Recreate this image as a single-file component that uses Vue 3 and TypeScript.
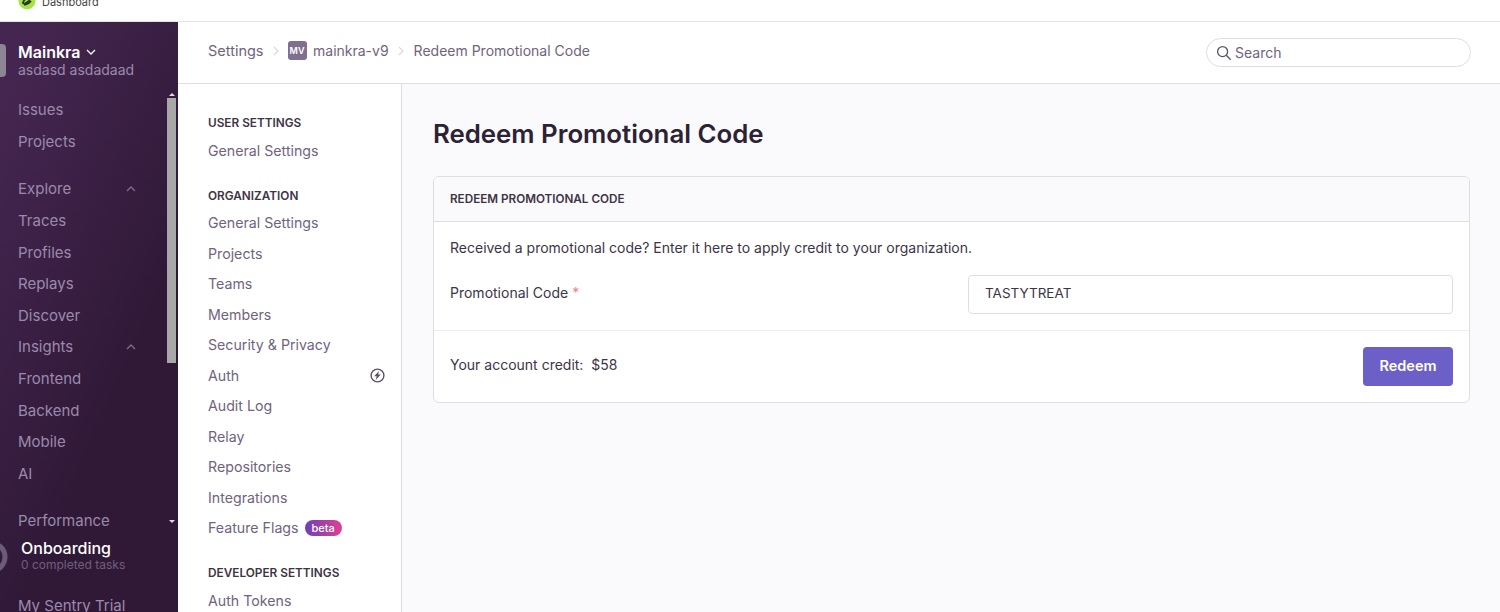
<template>
  <div class="app">
    <div class="tabstrip">
      <svg class="favicon" width="18" height="18" viewBox="0 0 18 18">
        <circle cx="9" cy="9" r="8.5" fill="#a4e34a" />
        <path d="M5 11c1-4 4-6 8-6-1 1-1 3-2 4s-3 1-4 3zM6 13c2-1 5-1 7-4" fill="none" stroke="#2b3a1a" stroke-width="1.8" />
      </svg>
      <span class="tabtitle">Dashboard</span>
    </div>
    <div class="shell">
      <aside class="sidebar">
        <div class="org">
          <div class="org-avatar"></div>
          <div>
            <div class="org-name">
              Mainkra
              <svg width="10" height="10" viewBox="0 0 10 10"><path d="M1 3l4 4 4-4" fill="none" stroke="#fff" stroke-width="1.3" /></svg>
            </div>
            <div class="org-user">asdasd asdadaad</div>
          </div>
        </div>
        <div class="side-scroll">
          <div class="side-list">
            <template v-for="item in sideItems" :key="item.label">
              <div class="side-item" :class="{ gap: item.gap }">
                <span>{{ item.label }}</span>
                <svg v-if="item.open" class="side-chev" width="10" height="10" viewBox="0 0 10 10"><path d="M1 7l4-4 4 4" fill="none" stroke="#7d6c8d" stroke-width="1.3" /></svg>
              </div>
            </template>
          </div>
          <div class="scrollbar">
            <span class="arrow-up"></span>
            <span class="thumb"></span>
            <span class="arrow-down"></span>
          </div>
        </div>
        <div class="onboarding">
          <svg class="ring" width="36" height="36" viewBox="0 0 36 36"><circle cx="18" cy="18" r="14" fill="none" stroke="#6b5a78" stroke-width="5" /></svg>
          <div>
            <div class="onb-title">Onboarding</div>
            <div class="onb-sub">0 completed tasks</div>
          </div>
        </div>
        <div class="trial">My Sentry Trial</div>
      </aside>

      <div class="content">
        <header class="topbar">
          <nav class="crumbs">
            <span class="crumb-root">Settings</span>
            <svg class="crumb-sep" width="8" height="10" viewBox="0 0 8 10"><path d="M2 1l4 4-4 4" fill="none" stroke="#d9d4df" stroke-width="1.1" /></svg>
            <span class="project-badge">MV</span>
            <span>mainkra-v9</span>
            <svg class="crumb-sep" width="8" height="10" viewBox="0 0 8 10"><path d="M2 1l4 4-4 4" fill="none" stroke="#d9d4df" stroke-width="1.1" /></svg>
            <span>Redeem Promotional Code</span>
          </nav>
          <div class="search">
            <svg width="16" height="16" viewBox="0 0 16 16"><circle cx="6.6" cy="6.6" r="5" fill="none" stroke="#5c5068" stroke-width="1.3" /><path d="M10.3 10.3l4.4 4.4" stroke="#5c5068" stroke-width="1.3" /></svg>
            <span>Search</span>
          </div>
        </header>
        <div class="body">
          <nav class="settings-nav">
            <section v-for="group in navGroups" :key="group.title" class="nav-group">
              <h4>{{ group.title }}</h4>
              <div v-for="link in group.links" :key="link.label" class="nav-link">
                <span>{{ link.label }}</span>
                <span v-if="link.beta" class="beta">beta</span>
                <svg v-if="link.bolt" class="bolt" width="15" height="15" viewBox="0 0 15 15">
                  <circle cx="7.5" cy="7.5" r="6.4" fill="none" stroke="#5c5068" stroke-width="1.4" />
                  <path d="M9 2.9L4.2 8.3h2.5l-1 3.8 5.1-5.5H8.2z" fill="#5c5068" />
                </svg>
              </div>
            </section>
          </nav>
          <main class="main">
            <h1>Redeem Promotional Code</h1>
            <div class="panel">
              <div class="panel-head">REDEEM PROMOTIONAL CODE</div>
              <p class="panel-text">Received a promotional code? Enter it here to apply credit to your organization.</p>
              <div class="field">
                <label>Promotional Code <span class="req">*</span></label>
                <div class="input">TASTYTREAT</div>
              </div>
              <div class="panel-foot">
                <span class="credit">Your account credit: &nbsp;$58</span>
                <button class="redeem">Redeem</button>
              </div>
            </div>
          </main>
        </div>
      </div>
    </div>
  </div>
</template>

<script setup lang="ts">
interface SideItem {
  label: string;
  gap?: boolean;
  open?: boolean;
}

interface NavLink {
  label: string;
  beta?: boolean;
  bolt?: boolean;
}

const sideItems: SideItem[] = [
  { label: 'Issues' },
  { label: 'Projects' },
  { label: 'Explore', gap: true, open: true },
  { label: 'Traces' },
  { label: 'Profiles' },
  { label: 'Replays' },
  { label: 'Discover' },
  { label: 'Insights', open: true },
  { label: 'Frontend' },
  { label: 'Backend' },
  { label: 'Mobile' },
  { label: 'AI' },
  { label: 'Performance', gap: true },
];

const navGroups: { title: string; links: NavLink[] }[] = [
  { title: 'USER SETTINGS', links: [{ label: 'General Settings' }] },
  {
    title: 'ORGANIZATION',
    links: [
      { label: 'General Settings' },
      { label: 'Projects' },
      { label: 'Teams' },
      { label: 'Members' },
      { label: 'Security & Privacy' },
      { label: 'Auth', bolt: true },
      { label: 'Audit Log' },
      { label: 'Relay' },
      { label: 'Repositories' },
      { label: 'Integrations' },
      { label: 'Feature Flags', beta: true },
    ],
  },
  { title: 'DEVELOPER SETTINGS', links: [{ label: 'Auth Tokens' }] },
];
</script>

<style scoped>
.app {
  width: 1500px;
  height: 612px;
  overflow: hidden;
  background: #fff;
  font-family: Inter, "Noto Sans", sans-serif;
  font-size: 14px;
  color: #3e3446;
}

.tabstrip {
  height: 22px;
  display: flex;
  align-items: flex-start;
  gap: 6px;
  padding-left: 18px;
  overflow: hidden;
  box-sizing: border-box;
  border-bottom: 1px solid #e4e1e8;
}

.favicon {
  margin-top: -8px;
  flex-shrink: 0;
}

.tabtitle {
  margin-top: -5px;
  font-size: 11px;
  line-height: 14px;
  color: #444;
}

.shell {
  display: flex;
  height: 590px;
}

.sidebar {
  width: 178px;
  flex-shrink: 0;
  display: flex;
  flex-direction: column;
  overflow: hidden;
  background: linear-gradient(294deg, #2f1937 35%, #452650 92%);
  color: #9b8aac;
}

.sidebar > * {
  flex-shrink: 0;
}

.org {
  display: flex;
  gap: 12px;
  height: 66px;
  padding-top: 21px;
  box-sizing: border-box;
  margin-left: -26px;
}

.org-avatar {
  width: 32px;
  height: 33px;
  margin-top: 1px;
  border-radius: 4px;
  background: #8d8494;
  flex-shrink: 0;
}

.org-name {
  display: flex;
  align-items: center;
  gap: 6px;
  font-size: 16px;
  line-height: 18px;
  font-weight: 600;
  color: #fff;
}

.org-user {
  font-size: 14px;
  line-height: 17px;
}

.side-scroll {
  position: relative;
  height: 450px;
  overflow: hidden;
}

.side-list {
  padding-top: 6px;
}

.side-item {
  display: flex;
  align-items: center;
  justify-content: space-between;
  height: 31.6px;
  padding: 0 42px 0 18px;
  font-size: 15px;
}

.side-item.gap {
  margin-top: 16px;
}

.side-chev {
  flex-shrink: 0;
}

.scrollbar {
  position: absolute;
  top: 0;
  right: 2px;
  bottom: 0;
  width: 9px;
  display: flex;
  flex-direction: column;
  align-items: center;
}

.arrow-up {
  margin-top: 5px;
  border: 3px solid transparent;
  border-top: 0;
  border-bottom: 3px solid #ddd;
}

.thumb {
  width: 9px;
  height: 265px;
  margin-top: 2px;
  background: #a8a8a8;
}

.arrow-down {
  margin-top: auto;
  margin-bottom: 15px;
  border: 3px solid transparent;
  border-bottom: 0;
  border-top: 3px solid #ddd;
}

.onboarding {
  display: flex;
  gap: 12px;
  margin-left: -9px;
  height: 58px;
  align-items: flex-start;
}

.ring {
  margin-left: -18px;
  margin-top: 1px;
  flex-shrink: 0;
}

.onb-title {
  font-size: 16px;
  line-height: 20px;
  font-weight: 500;
  color: #fff;
}

.onb-sub {
  font-size: 12px;
  line-height: 13px;
  color: #6f5f7f;
}

.trial {
  padding-left: 18px;
  font-size: 15px;
  line-height: 20px;
}

.content {
  flex: 1;
  min-width: 0;
  display: flex;
  flex-direction: column;
}

.topbar {
  height: 62px;
  flex-shrink: 0;
  display: flex;
  align-items: center;
  justify-content: space-between;
  box-sizing: border-box;
  padding: 0 29px 0 30px;
  border-bottom: 1px solid #e0dce5;
}

.crumbs {
  display: flex;
  align-items: center;
  color: #71637e;
  margin-top: -4px;
}

.crumb-root {
  font-size: 14.5px;
}

.crumb-sep {
  margin: 0 8px;
}

.crumb-sep + span + span + .crumb-sep {
  margin: 0 8.5px;
}

.project-badge {
  width: 19px;
  height: 19px;
  border-radius: 3px;
  background: #80708f;
  color: #fff;
  font-size: 9px;
  font-weight: 600;
  display: flex;
  align-items: center;
  justify-content: center;
  margin-right: 6.5px;
}

.search {
  width: 265px;
  height: 29px;
  box-sizing: border-box;
  display: flex;
  align-items: center;
  gap: 3px;
  padding-left: 9px;
  border: 1px solid #e0dce5;
  border-radius: 15px;
  color: #71637e;
}

.body {
  flex: 1;
  display: flex;
  min-height: 0;
}

.settings-nav {
  width: 224px;
  flex-shrink: 0;
  box-sizing: border-box;
  padding: 31px 16px 0 30px;
  border-right: 1px solid #e0dce5;
  overflow: hidden;
  font-size: 14.2px;
}

.nav-group {
  margin-bottom: 22px;
}

.nav-group h4 {
  margin: 0 0 4px;
  font-size: 11.8px;
  line-height: 16px;
  font-weight: 600;
  color: #3e3446;
}

.nav-link {
  display: flex;
  align-items: center;
  gap: 6px;
  height: 30.5px;
  color: #71637e;
}

.bolt {
  margin-left: auto;
}

.beta {
  font-size: 11px;
  line-height: 16px;
  font-weight: 500;
  padding: 0 7px;
  border-radius: 8px;
  color: #fff;
  background: linear-gradient(90deg, #6c3fb8, #e1408f);
}

.main {
  flex: 1;
  min-width: 0;
  box-sizing: border-box;
  padding: 32px 30px 0 31px;
  background: #faf9fb;
}

.main h1 {
  margin: 0 0 24px;
  font-size: 25.8px;
  line-height: 36px;
  font-weight: 600;
  color: #2b2233;
}

.panel {
  background: #fff;
  border: 1px solid #e0dce5;
  border-radius: 6px;
  overflow: hidden;
}

.panel-head {
  height: 45px;
  box-sizing: border-box;
  display: flex;
  align-items: center;
  padding-left: 16px;
  background: #faf9fb;
  border-bottom: 1px solid #e0dce5;
  font-size: 11.7px;
  font-weight: 600;
}

.panel-text {
  margin: 0;
  padding: 17px 16px 0;
  line-height: 18px;
}

.field {
  display: flex;
  align-items: center;
  padding: 18px 16px 16px;
  border-bottom: 1px solid #efedf1;
}

.field label {
  width: 518px;
  flex-shrink: 0;
  margin-bottom: 4px;
}

.req {
  color: #f0808a;
}

.input {
  flex: 1;
  height: 39px;
  box-sizing: border-box;
  display: flex;
  align-items: center;
  padding: 0 0 3px 16px;
  border: 1px solid #e0dce5;
  border-radius: 4px;
  font-size: 13.5px;
}

.panel-foot {
  display: flex;
  align-items: center;
  justify-content: space-between;
  padding: 16px;
}

.credit {
  margin-bottom: 4px;
}

.redeem {
  width: 90px;
  height: 39px;
  padding: 0 0 2px;
  border: 0;
  border-radius: 4px;
  background: #6c5fc7;
  color: #fff;
  font: inherit;
  font-size: 14.5px;
  font-weight: 600;
}
</style>

<style>
html,
body {
  margin: 0;
  overflow: hidden;
}
</style>
